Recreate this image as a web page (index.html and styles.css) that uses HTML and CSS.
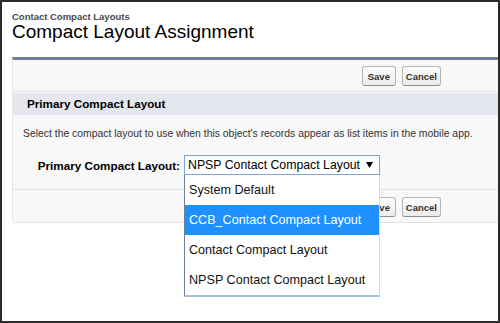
FILE: index.html
```html
<!DOCTYPE html>
<html lang="en">

<head>
    <meta charset="UTF-8">
    <meta name="viewport" content="width=device-width, initial-scale=1.0">
    <title>Compact Layout Assignment</title>
    <link rel="stylesheet" href="styles.css">
</head>

<body>
    <div class="frame">
        <div class="page-header">
            <div class="breadcrumb">Contact Compact Layouts</div>
            <h1>Compact Layout Assignment</h1>
        </div>

        <div class="panel">
            <div class="btn-row">
                <button type="button">Save</button>
                <button type="button">Cancel</button>
            </div>

            <h3 class="section-title">Primary Compact Layout</h3>

            <div class="section-body">
                <p class="hint">Select the compact layout to use when this object's records appear as list items in the mobile app.</p>

                <div class="field-row">
                    <label class="field-label">Primary Compact Layout:</label>
                    <div class="select-wrap">
                        <div class="select">
                            <span>NPSP Contact Compact Layout</span>
                            <svg class="arrow" width="7" height="6" viewBox="0 0 7 6"><path d="M0 0h7L3.5 6z" fill="#000"/></svg>
                        </div>
                        <ul class="options">
                            <li>System Default</li>
                            <li class="selected">CCB_Contact Compact Layout</li>
                            <li>Contact Compact Layout</li>
                            <li>NPSP Contact Compact Layout</li>
                        </ul>
                    </div>
                </div>
            </div>

            <div class="btn-row bottom">
                <button type="button">Save</button>
                <button type="button">Cancel</button>
            </div>
        </div>
    </div>
</body>

</html>
```

FILE: styles.css
```css
body {
    margin: 0;
    font-family: "Liberation Sans", Arial, sans-serif;
    color: #000;
}

.frame {
    width: 500px;
    height: 323px;
    box-sizing: border-box;
    border: 2px solid #2b2b2b;
    background: #fff;
    overflow: hidden;
}

.page-header {
    padding: 9px 0 0 10px;
}

.breadcrumb {
    font-size: 9.5px;
    line-height: 11px;
    font-weight: bold;
    color: #4a4a4a;
}

h1 {
    margin: 0;
    font-size: 19px;
    line-height: 20px;
    font-weight: normal;
}

.panel {
    margin: 15px 0 0 10px;
    background: #f8f8f8;
    border-top: 3px solid #6f7d95;
    border-left: 1px solid #e6e6e6;
    border-bottom: 1px solid #e6e6e6;
    border-radius: 0 0 0 4px;
}

.btn-row {
    display: flex;
    justify-content: flex-end;
    gap: 6px;
    padding: 6px 57px 5px 0;
    border-bottom: 1px solid #e0e3e5;
}

.btn-row.bottom {
    border-bottom: none;
    border-top: 1px solid #e0e3e5;
    padding: 7px 57px 5px 0;
}

button {
    height: 20px;
    min-width: 34px;
    padding: 0 3px;
    font-family: "Liberation Sans", Arial, sans-serif;
    font-size: 9.5px;
    font-weight: bold;
    color: #333;
    background: linear-gradient(#fdfdfd, #ececec);
    border: 1px solid #b5b5b5;
    border-bottom-color: #8f8f8f;
    border-radius: 3px;
}

.section-title {
    margin: 1px 0 0;
    height: 22px;
    line-height: 22px;
    padding-left: 14px;
    background: #e4e7ee;
    font-size: 11.7px;
    font-weight: bold;
}

.section-body {
    padding: 12px 0 14px;
}

.hint {
    margin: 0 0 14px 10px;
    font-size: 10.4px;
    line-height: 14px;
    color: #333;
}

.field-row {
    display: flex;
    align-items: center;
}

.field-label {
    width: 167px;
    text-align: right;
    margin-right: 4px;
    font-size: 11.7px;
    font-weight: bold;
}

.select-wrap {
    position: relative;
}

.select {
    width: 196px;
    height: 20px;
    box-sizing: border-box;
    display: flex;
    align-items: center;
    justify-content: space-between;
    padding: 0 6px 0 3px;
    border: 1px solid #7ea4d6;
    background: #fff;
    font-size: 12.3px;
    white-space: nowrap;
}

.options {
    position: absolute;
    top: 100%;
    left: 0;
    width: 196px;
    box-sizing: border-box;
    margin: 0;
    padding: 0;
    list-style: none;
    background: #fff;
    border-left: 1px solid #6d7f99;
    border-right: 1px solid #d4dde9;
    border-bottom: 2px solid #a8bfe0;
}

.options li {
    height: 30px;
    line-height: 30px;
    padding-left: 4px;
    font-size: 12.6px;
    color: #111;
    white-space: nowrap;
}

.options li.selected {
    background: #1e90ff;
    color: #fff;
}
```
